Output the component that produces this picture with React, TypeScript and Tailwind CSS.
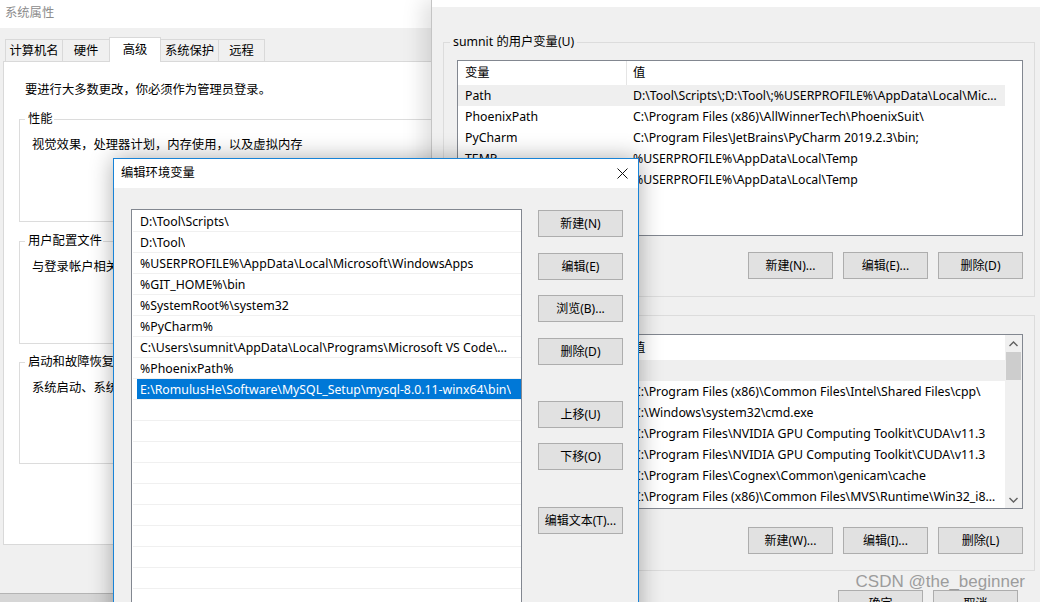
import React from "react";

const ui = "font-['Segoe_UI','Noto_Sans','Noto_Sans_CJK_SC',sans-serif]";

function Btn({ children, className = "" }: { children: React.ReactNode; className?: string }) {
  return (
    <button
      className={`h-[27px] w-[85px] shrink-0 flex items-center justify-center bg-[#e1e1e1] border border-[#adadad] text-[12px] leading-none text-black ${className}`}
    >
      {children}
    </button>
  );
}

function Chevron({ down = false }: { down?: boolean }) {
  return (
    <svg width="9" height="6" viewBox="0 0 9 6" className={down ? "rotate-180" : ""}>
      <polyline points="0.5,5 4.5,1 8.5,5" fill="none" stroke="#606060" strokeWidth="1.4" />
    </svg>
  );
}

type Row = { name?: string; value: string; grey?: boolean };

const userVars: Row[] = [
  { name: "Path", value: "D:\\Tool\\Scripts\\;D:\\Tool\\;%USERPROFILE%\\AppData\\Local\\Microsoft\\WindowsApps;%GIT_HOME%\\bin", grey: true },
  { name: "PhoenixPath", value: "C:\\Program Files (x86)\\AllWinnerTech\\PhoenixSuit\\" },
  { name: "PyCharm", value: "C:\\Program Files\\JetBrains\\PyCharm 2019.2.3\\bin;" },
  { name: "TEMP", value: "%USERPROFILE%\\AppData\\Local\\Temp" },
  { name: "TMP", value: "%USERPROFILE%\\AppData\\Local\\Temp" },
];

const sysVars: Row[] = [
  { value: "", grey: true },
  { value: "C:\\Program Files (x86)\\Common Files\\Intel\\Shared Files\\cpp\\" },
  { value: "C:\\Windows\\system32\\cmd.exe" },
  { value: "C:\\Program Files\\NVIDIA GPU Computing Toolkit\\CUDA\\v11.3" },
  { value: "C:\\Program Files\\NVIDIA GPU Computing Toolkit\\CUDA\\v11.3" },
  { value: "C:\\Program Files\\Cognex\\Common\\genicam\\cache" },
  { value: "C:\\Program Files (x86)\\Common Files\\MVS\\Runtime\\Win32_i86;C:\\Program Files (x86)\\Common Files\\MVS\\Runtime\\Win64_x64" },
];

function VarTable({ rows, headerH }: { rows: Row[]; headerH: string }) {
  return (
    <div className="w-[547px] shrink-0">
      <div className={`flex ${headerH}`}>
        <div className="w-[169px] pl-[7px] flex items-center border-r border-[#e5e5e5]">变量</div>
        <div className="flex-1 pl-[6px] flex items-center">值</div>
      </div>
      {rows.map((r, i) => (
        <div key={i} className={`flex h-[21px] items-center pt-[1px] ${r.grey ? "bg-[#efefef]" : ""}`}>
          <div className="w-[169px] pl-[7px] truncate">{r.name}</div>
          <div className="w-[378px] pl-[6px] pr-[5px] truncate">{r.value}</div>
        </div>
      ))}
    </div>
  );
}

const pathItems = [
  "D:\\Tool\\Scripts\\",
  "D:\\Tool\\",
  "%USERPROFILE%\\AppData\\Local\\Microsoft\\WindowsApps",
  "%GIT_HOME%\\bin",
  "%SystemRoot%\\system32",
  "%PyCharm%",
  "C:\\Users\\sumnit\\AppData\\Local\\Programs\\Microsoft VS Code\\bin",
  "%PhoenixPath%",
  "E:\\RomulusHe\\Software\\MySQL_Setup\\mysql-8.0.11-winx64\\bin\\",
  "", "", "", "", "", "", "", "", "", "", "",
];

export default function App() {
  return (
    <div className={`relative w-[1040px] h-[602px] overflow-hidden bg-[#d6d6d6] text-[12.3px] leading-[16px] text-black ${ui}`}>
      {/* ===== 系统属性 ===== */}
      <div className="absolute left-0 top-0 w-[432px] h-[594px] bg-[#f0f0f0] border-b border-[#b4b4b4] overflow-hidden">
        <div className="h-[28px] bg-white pl-[5px] pt-[5px] text-[#8c8c8c]">系统属性</div>
        <div className="relative z-10 -mb-px mt-[9px] flex items-end pl-[5px] h-[25px]">
          <div className="w-[58px] h-[22px] mb-px flex items-center justify-center border border-b-0 border-[#d9d9d9]">计算机名</div>
          <div className="w-[48px] h-[22px] mb-px -ml-px flex items-center justify-center border border-b-0 border-[#d9d9d9]">硬件</div>
          <div className="w-[52px] h-[25px] -ml-px flex items-center justify-center bg-white border border-b-0 border-[#d9d9d9]">高级</div>
          <div className="w-[59px] h-[22px] mb-px -ml-px flex items-center justify-center border border-b-0 border-[#d9d9d9]">系统保护</div>
          <div className="w-[47px] h-[22px] mb-px -ml-px flex items-center justify-center border border-b-0 border-[#d9d9d9]">远程</div>
        </div>
        <div className="ml-[3px] w-[460px] h-[484px] bg-white border border-[#d9d9d9] pt-[20px]">
          <div className="pl-[21px]">要进行大多数更改，你必须作为管理员登录。</div>
          <fieldset className="ml-[15px] mt-[13px] w-[440px] h-[111px] border border-[#dcdcdc]">
            <legend className="ml-[5px] pl-[3px] pr-[1px]">性能</legend>
            <div className="mt-[10px] pl-[12px]">视觉效果，处理器计划，内存使用，以及虚拟内存</div>
          </fieldset>
          <fieldset className="ml-[15px] mt-[11px] w-[440px] h-[111px] border border-[#dcdcdc]">
            <legend className="ml-[5px] pl-[3px] pr-[1px]">用户配置文件</legend>
            <div className="mt-[10px] pl-[12px]">与登录帐户相关的桌面设置</div>
          </fieldset>
          <fieldset className="ml-[15px] mt-[10px] w-[440px] h-[110px] border border-[#dcdcdc]">
            <legend className="ml-[5px] pl-[3px] pr-[1px]">启动和故障恢复</legend>
            <div className="mt-[10px] pl-[12px]">系统启动、系统故障和调试信息</div>
          </fieldset>
        </div>
      </div>

      {/* ===== 环境变量 ===== */}
      <div className="absolute left-[431px] top-0 w-[609px] h-[602px] bg-[#f0f0f0] border-l border-[#c4c4c4] shadow-[-8px_0_20px_rgba(0,0,0,0.13)]">
        <div className="h-[7px] bg-white" />
        <fieldset className="ml-[11px] mt-[27px] w-[592px] h-[263px] border border-[#dcdcdc]">
          <legend className="ml-[6px] px-[3px]">sumnit 的用户变量(U)</legend>
          <div className="ml-[13px] mt-[10px] w-[566px] h-[176px] bg-white border border-[#828790] overflow-hidden">
            <VarTable rows={userVars} headerH="h-[24px]" />
          </div>
          <div className="mt-[16px] pr-[11px] flex justify-end gap-[10px]">
            <Btn>新建(N)...</Btn>
            <Btn>编辑(E)...</Btn>
            <Btn>删除(D)</Btn>
          </div>
        </fieldset>
        <fieldset className="ml-[11px] mt-[10px] w-[592px] h-[264px] border border-[#dcdcdc]">
          <legend className="ml-[6px] px-[3px]">系统变量(S)</legend>
          <div className="ml-[13px] mt-[11px] w-[566px] h-[175px] bg-white border border-[#828790] overflow-hidden flex">
            <VarTable rows={sysVars} headerH="h-[25px]" />
            <div className="w-[17px] h-full bg-[#f0f0f0] flex flex-col">
              <div className="h-[17px] flex items-center justify-center"><Chevron /></div>
              <div className="mx-[1px] h-[28px] bg-[#cdcdcd]" />
              <div className="flex-1" />
              <div className="h-[17px] flex items-center justify-center"><Chevron down /></div>
            </div>
          </div>
          <div className="mt-[18px] pr-[11px] flex justify-end gap-[10px]">
            <Btn>新建(W)...</Btn>
            <Btn>编辑(I)...</Btn>
            <Btn>删除(L)</Btn>
          </div>
        </fieldset>
        <div className="mt-[19px] pr-[22px] flex justify-end gap-[10px]">
          <Btn>确定</Btn>
          <Btn>取消</Btn>
        </div>
      </div>

      {/* ===== 编辑环境变量 ===== */}
      <div className="absolute left-[113px] top-[158px] w-[526px] h-[470px] bg-[#f0f0f0] border border-[#1883d7] shadow-[0_0_22px_rgba(0,0,0,0.32)]">
        <div className="h-[29px] bg-white flex items-center justify-between pl-[7px] pr-[10px] pb-[1px]">
          <span>编辑环境变量</span>
          <svg width="11" height="11" viewBox="0 0 11 11">
            <path d="M0.5 0.5L10.5 10.5M10.5 0.5L0.5 10.5" stroke="#111" strokeWidth="1" />
          </svg>
        </div>
        <div className="flex pl-[17px] pt-[21px]">
          <div className="w-[391px] h-[420px] bg-white border border-[#828790] pt-[1px] overflow-hidden">
            {pathItems.map((p, i) => {
              const sel = i === 8;
              return (
                <div key={i} className="h-[21px] ml-[1px] border-b border-[#f0f0f0]">
                  <div className={`h-full ml-[4px] pl-[3px] pr-[7px] pt-[2px] flex items-center ${sel ? "bg-[#0078d7] text-white" : ""}`}>
                    <span className="truncate">{p}</span>
                  </div>
                </div>
              );
            })}
          </div>
          <div className="ml-[16px] flex flex-col">
            <Btn className="mt-[1px]">新建(N)</Btn>
            <Btn className="mt-[16px]">编辑(E)</Btn>
            <Btn className="mt-[15px]">浏览(B)...</Btn>
            <Btn className="mt-[16px]">删除(D)</Btn>
            <Btn className="mt-[36px]">上移(U)</Btn>
            <Btn className="mt-[15px]">下移(O)</Btn>
            <Btn className="mt-[37px]">编辑文本(T)...</Btn>
          </div>
        </div>
      </div>

      {/* watermark */}
      <div className="absolute right-[15px] top-[572px] text-[17px] leading-[20px] text-[#9c9c9c] font-['Liberation_Sans',Arial,sans-serif]">
        CSDN @the_beginner
      </div>
    </div>
  );
}
